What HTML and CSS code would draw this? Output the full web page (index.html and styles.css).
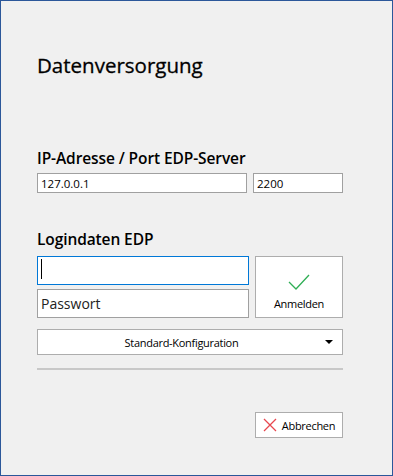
FILE: index.html
```html
<!DOCTYPE html>
<html lang="de">
<head>
    <meta charset="UTF-8">
    <meta name="viewport" content="width=device-width, initial-scale=1.0">
    <title>Datenversorgung</title>
    <link rel="stylesheet" href="styles.css">
</head>
<body>
    <div class="window">
        <!-- Titel -->
        <h1 class="title">Datenversorgung</h1>

        <!-- Server -->
        <div class="group server">
            <h2 class="group-title">IP-Adresse / Port EDP-Server</h2>
            <div class="server-row">
                <input class="field ip" type="text" value="127.0.0.1">
                <input class="field port" type="text" value="2200">
            </div>
        </div>

        <!-- Login -->
        <div class="group login">
            <h2 class="group-title">Logindaten EDP</h2>
            <div class="login-grid">
                <div class="login-fields">
                    <div class="field-wrap">
                        <input class="field user focused" type="text">
                        <span class="caret"></span>
                    </div>
                    <input class="field pass" type="text" placeholder="Passwort">
                </div>
                <button class="btn login-btn">
                    <svg width="22" height="16" viewBox="0 0 22 16">
                        <path d="M1 8 L8 15 L21 1" fill="none" stroke="#2fae55" stroke-width="1.3"/>
                    </svg>
                    <span>Anmelden</span>
                </button>
            </div>
            <div class="select">
                <span class="select-text">Standard-Konfiguration</span>
                <span class="select-arrow"></span>
            </div>
        </div>

        <div class="separator"></div>

        <!-- Abbrechen -->
        <div class="footer">
            <button class="btn cancel">
                <svg width="14" height="14" viewBox="0 0 14 14">
                    <path d="M1 1 L13 13 M13 1 L1 13" fill="none" stroke="#e8474f" stroke-width="1.3"/>
                </svg>
                <span>Abbrechen</span>
            </button>
        </div>
    </div>
</body>
</html>
```

FILE: styles.css
```css
body {
    margin: 0;
    font-family: 'Open Sans', 'Noto Sans', sans-serif;
    background: #F0F0F0;
    color: #000;
}

.window {
    width: 393px;
    height: 476px;
    box-sizing: border-box;
    border: 1px solid #2B579A;
    background: #F0F0F0;
    padding: 52px 0 0 36px;
}

.title {
    margin: 0;
    font-size: 20.5px;
    font-weight: 400;
    line-height: 24px;
    letter-spacing: 0;
    -webkit-text-stroke: 0.3px #000;
}

.group-title {
    margin: 0 0 5px;
    font-size: 15.5px;
    font-weight: 600;
    line-height: 20px;
    letter-spacing: -0.1px;
}

.server {
    margin-top: 71px;
}

.login {
    margin-top: 36px;
}

.login .group-title {
    margin-bottom: 7px;
}

.server-row {
    display: flex;
    gap: 6px;
    width: 306px;
}

.field {
    box-sizing: border-box;
    margin: 0;
    border: 1px solid #A0A0A0;
    background: #FFFFFF;
    font-family: inherit;
    color: #000;
    outline: none;
}

.ip,
.port {
    height: 20px;
    font-size: 11.5px;
    padding: 0 3px;
}

.ip {
    width: 210px;
}

.port {
    width: 90px;
}

.login-grid {
    display: flex;
    gap: 6px;
    width: 306px;
}

.login-fields {
    display: flex;
    flex-direction: column;
    gap: 4px;
    width: 212px;
}

.field-wrap {
    position: relative;
}

.user,
.pass {
    width: 212px;
    height: 29px;
    font-size: 14px;
    padding: 0 3px;
}

.user.focused {
    border-color: #0078D7;
}

.caret {
    position: absolute;
    left: 4px;
    top: 3px;
    width: 1px;
    height: 20px;
    background: #000;
}

.pass::placeholder {
    color: #222;
    opacity: 1;
}

.btn {
    box-sizing: border-box;
    margin: 0;
    border: 1px solid #ADADAD;
    background: #FFFFFF;
    font-family: inherit;
    font-size: 11px;
    letter-spacing: -0.3px;
    color: #000;
    cursor: pointer;
}

.login-btn {
    width: 88px;
    height: 62px;
    display: flex;
    flex-direction: column;
    align-items: center;
    padding: 17px 0 0;
    gap: 6px;
}

.select {
    box-sizing: border-box;
    width: 306px;
    height: 26px;
    margin-top: 11px;
    border: 1px solid #ADADAD;
    background: #FFFFFF;
    display: flex;
    align-items: center;
    font-size: 11px;
    letter-spacing: -0.3px;
}

.select-text {
    flex: 1;
    text-align: center;
}

.select-arrow {
    width: 0;
    height: 0;
    margin-right: 9px;
    border-left: 4px solid transparent;
    border-right: 4px solid transparent;
    border-top: 4px solid #000;
}

.separator {
    width: 306px;
    height: 2px;
    margin-top: 13px;
    background: #C8C8C8;
}

.footer {
    width: 306px;
    display: flex;
    justify-content: flex-end;
    margin-top: 42px;
}

.cancel {
    width: 88px;
    height: 26px;
    display: flex;
    align-items: center;
    justify-content: center;
    gap: 5px;
    padding: 0;
}
```
